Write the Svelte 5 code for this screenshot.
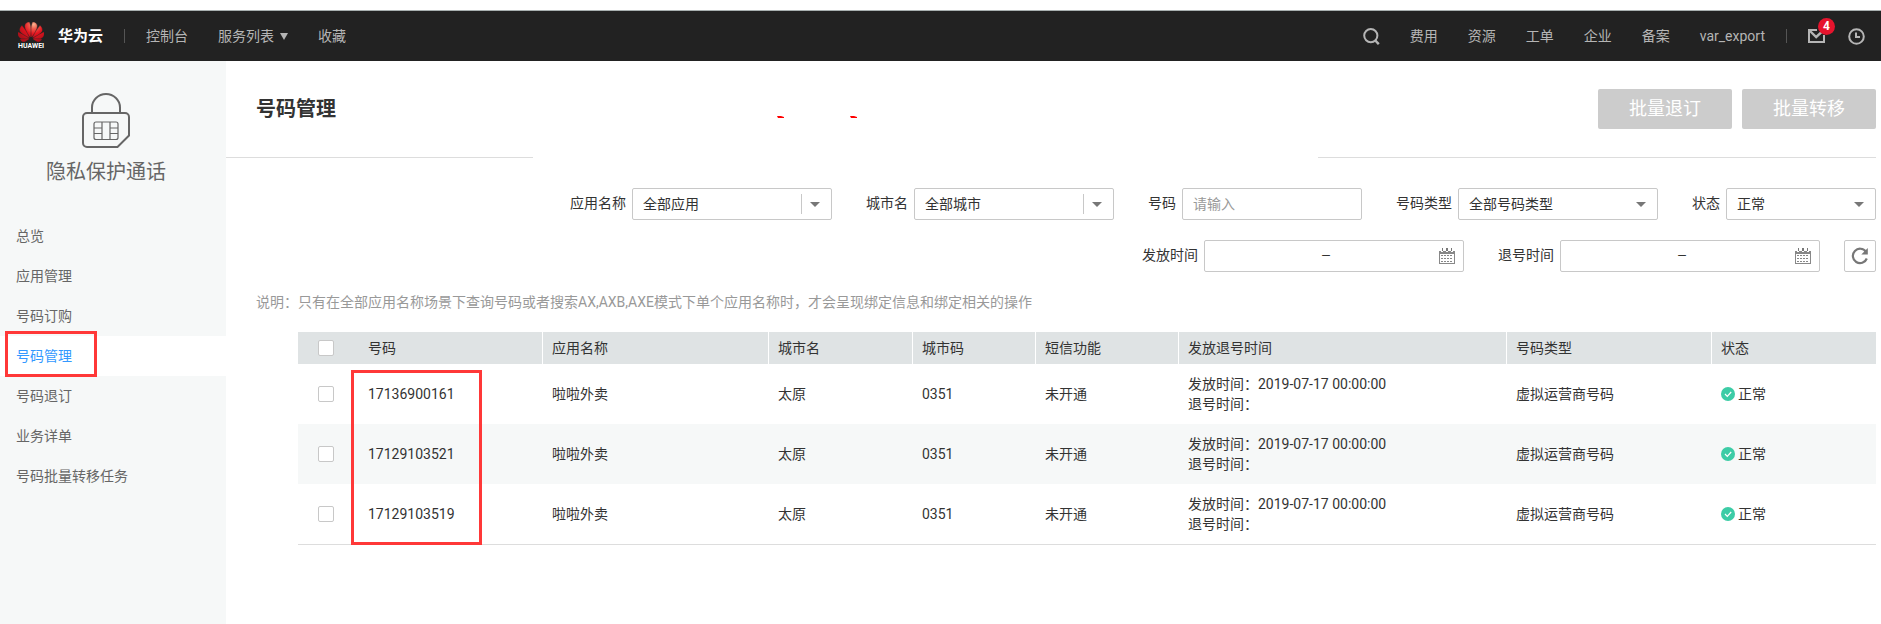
<script>
  const leftNav = ['控制台', '服务列表', '收藏'];
  const rightNav = ['费用', '资源', '工单', '企业', '备案', 'var_export'];
  const menu = ['总览', '应用管理', '号码订购', '号码管理', '号码退订', '业务详单', '号码批量转移任务'];
  const active = '号码管理';
  const columns = ['号码', '应用名称', '城市名', '城市码', '短信功能', '发放退号时间', '号码类型', '状态'];
  const rows = ['17136900161', '17129103521', '17129103519'].map((number) => ({
    number,
    app: '啦啦外卖',
    city: '太原',
    code: '0351',
    sms: '未开通',
    issued: '2019-07-17 00:00:00',
    type: '虚拟运营商号码',
    status: '正常'
  }));
</script>

{#snippet dateRange(id, label)}
  <div class="field">
    <label for={id}>{label}</label>
    <div class="range">
      <input {id} type="text" />
      <span>—</span>
      <input type="text" aria-label={label + '结束'} />
      <button type="button" aria-label="选择日期">
        <svg width="16" height="16" viewBox="0 0 16 16" shape-rendering="crispEdges">
          <path d="M0 3h2v1h2V3h3v1h2V3h3v1h2V3h2v13H0z" fill="#888" />
          <path d="M3 0h1v3H3zM7 0h2v3H7zM12 0h1v3h-1z" fill="#777" />
          <path d="M1 6h14v9H1z" fill="#fff" />
          <g fill="#888">
            {#each [7, 10, 13] as y}
              {#each [2, 5, 8, 11] as x}
                <rect x={x + 0} {y} width="2" height="1" />
              {/each}
            {/each}
          </g>
        </svg>
      </button>
    </div>
  </div>
{/snippet}

<header class="topbar">
  <a class="brand" href="#home">
    <span class="logo">
      <svg width="26" height="20" viewBox="0 2.8 24 18.4" aria-hidden="true">
        <defs>
          <radialGradient id="petal" gradientUnits="userSpaceOnUse" cx="14.5" cy="5" r="16">
            <stop offset="0" stop-color="#f9b48f" />
            <stop offset="0.25" stop-color="#ef5b4c" />
            <stop offset="0.55" stop-color="#e5141f" />
            <stop offset="1" stop-color="#b0101a" />
          </radialGradient>
        </defs>
        <path fill="url(#petal)" stroke="url(#petal)" stroke-width="0.4" d="M3.67 6.14S1.82 7.91 1.72 9.78v.35c.08 1.51 1.22 2.4 1.22 2.4 1.83 1.79 6.26 4.04 7.3 4.55 0 0 .06.03.1-.01l.02-.04v-.04C7.52 10.8 3.67 6.14 3.67 6.14zM9.65 18.6c-.02-.08-.1-.08-.1-.08l-7.38.26c.8 1.43 2.15 2.53 3.56 2.2.96-.25 3.16-1.78 3.88-2.3.06-.05.04-.09.04-.09zm.08-.78C6.49 15.63.21 12.28.21 12.28c-.15.46-.2.9-.21 1.3v.07c0 1.07.4 1.82.4 1.82.8 1.69 2.34 2.2 2.34 2.2.7.3 1.4.31 1.4.31.12.02 4.4 0 5.54 0 .05 0 .08-.05.08-.05v-.06c0-.03-.03-.05-.03-.05zM9.06 3.19a3.42 3.42 0 00-2.57 3.15v.41c.03.6.16 1.05.16 1.05.66 2.9 3.86 7.65 4.55 8.65.05.05.1.03.1.03a.1.1 0 00.06-.1c1.06-10.6-1.11-13.42-1.11-13.42-.32.02-1.19.23-1.19.23zm8.299 2.27s-.49-1.8-2.44-2.28c0 0-.57-.14-1.17-.22 0 0-2.18 2.81-1.12 13.43.01.07.06.08.06.08.07.03.1-.03.1-.03.72-1.03 3.9-5.76 4.55-8.64 0 0 .36-1.4.02-2.34zm-2.92 13.07s-.07 0-.09.05c0 0-.01.07.03.1.7.51 2.85 2 3.88 2.3 0 0 .16.05.43.06h.14c.69-.02 1.9-.37 3-2.26l-7.4-.25zm7.83-8.41c.14-2.06-1.94-3.97-1.94-3.98 0 0-3.85 4.66-6.67 10.8 0 0-.03.08.02.13l.04.01h.06c1.06-.53 5.46-2.77 7.28-4.54 0 0 1.15-.93 1.21-2.42zm1.52 2.14s-6.28 3.37-9.52 5.55c0 0-.05.04-.03.11 0 0 .03.06.07.06 1.16 0 5.56 0 5.67-.02 0 0 .57-.02 1.27-.29 0 0 1.56-.5 2.37-2.27 0 0 .73-1.45.17-3.14z" />
      </svg>
      <small>HUAWEI</small>
    </span>
    <strong>华为云</strong>
  </a>
  <i class="bar"></i>
  <nav class="left">
    {#each leftNav as item}
      <a href="#nav">{item}{#if item === '服务列表'}<i class="caret"></i>{/if}</a>
    {/each}
  </nav>
  <nav class="right">
    <button type="button" aria-label="搜索">
      <svg width="17" height="17" viewBox="0 0 17 17" fill="none" stroke="#b5b5b5" stroke-width="2">
        <ellipse cx="7.8" cy="7.6" rx="6.6" ry="6.6" /><path d="M11.8 12l4 4.2" stroke-width="2.4" />
      </svg>
    </button>
    {#each rightNav as item}
      <a href="#nav">{item}</a>
    {/each}
  </nav>
  <i class="bar"></i>
  <div class="tools">
    <button type="button" class="mail" aria-label="消息">
      <svg width="17" height="16" viewBox="0 0 17 16" fill="none" stroke="#b5b5b5" stroke-width="2">
        <path d="M9 2H1v12h15V7" /><path d="M2 3l6.2 6 5.3-4.8" stroke-width="2.4" />
      </svg>
      <span class="badge">4</span>
    </button>
    <button type="button" aria-label="历史">
      <svg width="17" height="17" viewBox="0 0 17 17" fill="none" stroke="#b5b5b5" stroke-width="2">
        <circle cx="8.5" cy="8.5" r="7.3" /><path d="M8 4.5v4.5h4" />
      </svg>
    </button>
  </div>
</header>

<div class="layout">
  <aside>
    <div class="service">
      <svg width="48" height="56" viewBox="0 0 48 56" fill="none" stroke="#666" stroke-width="2">
        <path d="M10 20V14.5a14 13.5 0 0 1 28 0V20" />
        <path d="M5 20h38a4 4 0 0 1 4 4v18.500L35.500 54H5a4 4 0 0 1-4-4V24a4 4 0 0 1 4-4z" />
        <g stroke-width="1.200">
          <rect x="12" y="29" width="24" height="17.500" rx="2" />
          <path d="M20 29v17.500M28 29v17.500M12 35h8M12 40.500h8M28 35h8M28 40.500h8" />
        </g>
      </svg>
      <h2>隐私保护通话</h2>
    </div>
    <ul>
      {#each menu as item}
        <li class:active={item === active}>
          <a href="#menu">{item}</a>
          {#if item === active}<i class="mark"></i>{/if}
        </li>
      {/each}
    </ul>
  </aside>

  <main>
    <div class="head">
      <h1>号码管理</h1>
      <svg class="ticks" width="80" height="2" viewBox="0 0 80 2" aria-hidden="true">
        <path d="M0 0h4l3 1v1H1zM73 0h4l3 1v1h-6z" fill="#f00" />
      </svg>
      <div class="actions">
        <button type="button">批量退订</button>
        <button type="button">批量转移</button>
      </div>
    </div>
    <div class="rule"></div>

    <form>
      <div class="line">
        <div class="field">
          <label for="filter-app">应用名称</label>
          <span class="select split"><select id="filter-app"><option>全部应用</option></select></span>
        </div>
        <div class="field">
          <label for="filter-city">城市名</label>
          <span class="select split"><select id="filter-city"><option>全部城市</option></select></span>
        </div>
        <div class="field">
          <label for="filter-number">号码</label>
          <input class="text" id="filter-number" type="text" placeholder="请输入" />
        </div>
        <div class="field">
          <label for="filter-type">号码类型</label>
          <span class="select"><select id="filter-type"><option>全部号码类型</option></select></span>
        </div>
        <div class="field">
          <label for="filter-state">状态</label>
          <span class="select short"><select id="filter-state"><option>正常</option></select></span>
        </div>
      </div>
      <div class="line">
        {@render dateRange('filter-issued', '发放时间')}
        {@render dateRange('filter-cancelled', '退号时间')}
        <button class="refresh" type="button" aria-label="刷新">
          <svg width="18" height="18" viewBox="0 0 18 18" fill="none" stroke="#777" stroke-width="2.200">
            <path d="M15 4.800A7.200 7.200 0 1 0 15.800 11.500" /><path d="M16.800 1v6.500h-6.500z" fill="#777" stroke="none" />
          </svg>
        </button>
      </div>
    </form>

    <p class="note">说明：只有在全部应用名称场景下查询号码或者搜索AX,AXB,AXE模式下单个应用名称时，才会呈现绑定信息和绑定相关的操作</p>

    <div class="grid">
      <table>
        <colgroup>
          {#each [60, 184, 226, 144, 123, 143, 328, 205, 165] as w}
            <col style:width="{(w / 1578) * 100}%" />
          {/each}
        </colgroup>
        <thead>
          <tr>
            <th class="check"><input type="checkbox" aria-label="全选" /></th>
            {#each columns as c}<th>{c}</th>{/each}
          </tr>
        </thead>
        <tbody>
          {#each rows as r}
            <tr>
              <td class="check"><input type="checkbox" aria-label={r.number} /></td>
              <td>{r.number}</td>
              <td>{r.app}</td>
              <td>{r.city}</td>
              <td>{r.code}</td>
              <td>{r.sms}</td>
              <td>发放时间：{r.issued}<br />退号时间：</td>
              <td>{r.type}</td>
              <td>
                <span class="status">
                  <svg width="14" height="14" viewBox="0 0 14 14">
                    <circle cx="7" cy="7" r="7" fill="#3dcca6" />
                    <path d="M4 7l2.300 2.400L10.200 5" fill="none" stroke="#fff" stroke-width="1.200" />
                  </svg>{r.status}
                </span>
              </td>
            </tr>
          {/each}
        </tbody>
      </table>
      <i class="mark"></i>
    </div>
  </main>
</div>

<style>
  :global(body) {
    background: #fff;
    color: #333;
    font: 14px/20px Roboto, 'Noto Sans CJK SC', sans-serif;
  }
  :global(#app) { display: flex; flex-direction: column; min-height: 100vh; }
  a { color: inherit; text-decoration: none; }
  svg { display: block; flex: none; }
  button, input, select { font: inherit; color: inherit; box-sizing: border-box; }
  button { padding: 0; border: 0; background: none; }

  .topbar {
    display: flex;
    align-items: center;
    height: 50px;
    margin-top: 10px;
    padding: 0 16px 0 18px;
    border-top: 1px solid #a9b0b0;
    background: #222;
    color: #b5b5b5;
  }
  .brand { display: flex; align-items: center; gap: 14px; color: #fff; }
  .logo { display: flex; flex-direction: column; width: 26px; }
  .logo small { font-size: 7px; line-height: 9px; font-weight: 700; }
  .brand strong { font-size: 15px; }
  .bar { width: 1px; height: 14px; margin: 0 21px; background: #555; }
  nav { display: flex; align-items: center; gap: 30px; }
  .left a { display: flex; align-items: center; gap: 6px; }
  .right { margin-left: auto; }
  .caret { border: 4px solid transparent; border-top: 7px solid #b5b5b5; border-bottom: 0; }
  .tools { display: flex; align-items: center; gap: 23px; }
  .mail { position: relative; }
  .badge {
    position: absolute;
    left: 10px;
    top: -10px;
    width: 17px;
    height: 17px;
    border-radius: 50%;
    background: #e6142d;
    color: #fff;
    font-size: 12px;
    line-height: 17px;
    font-weight: 700;
    text-align: center;
  }

  .layout { display: flex; flex: 1; }
  aside { flex: none; width: 226px; background: #f6f8f8; color: #666; }
  .service { display: flex; flex-direction: column; align-items: center; padding: 32px 14px 0 0; }
  h2 { margin: 9px 0 0; font-size: 20px; line-height: 28px; font-weight: 400; }
  ul { margin: 30px 0 0; padding: 0; list-style: none; }
  li { position: relative; }
  li a { display: block; padding: 0 16px; line-height: 40px; }
  .active { background: #fff; color: #3399ff; }
  .mark { position: absolute; box-sizing: border-box; border: 3px solid #ff3838; pointer-events: none; }
  li .mark { left: 5px; top: -5px; width: 92px; height: 46px; }

  main { flex: 1; min-width: 0; padding-right: 5px; }
  .head { position: relative; display: flex; align-items: center; justify-content: space-between; height: 96px; padding-left: 30px; }
  h1 { margin: 0; font-size: 20px; line-height: 30px; font-weight: 700; }
  .ticks { position: absolute; left: 551px; top: 55px; }
  .actions { display: flex; gap: 10px; }
  .actions button { width: 134px; height: 40px; border-radius: 2px; background: #ccc; color: #fff; font-size: 18px; }
  .rule { height: 1px; background: linear-gradient(90deg, #ddd 18.6%, transparent 0 66.2%, #ddd 0); }

  form { display: flex; flex-direction: column; gap: 20px; margin-top: 30px; }
  .line { display: flex; justify-content: flex-end; gap: 34px; }
  .field { display: flex; gap: 6px; }
  .field label { line-height: 30px; white-space: nowrap; }
  .select { position: relative; width: 200px; }
  .short { width: 150px; }
  select, .text, .range, .refresh { height: 32px; border: 1px solid #c8c8c8; border-radius: 2px; background: #fff; }
  select { display: block; width: 100%; padding: 0 10px; appearance: none; }
  .select::after {
    content: '';
    position: absolute;
    right: 12px;
    top: 14px;
    border: 5px solid transparent;
    border-top-color: #777;
    border-bottom: 0;
    pointer-events: none;
  }
  .split::before { content: ''; position: absolute; right: 30px; top: 6px; width: 1px; height: 20px; background: #c8c8c8; }
  .text { width: 180px; padding: 0 10px; }
  .text::placeholder { color: #999; }
  .range { display: flex; align-items: center; box-sizing: border-box; width: 260px; padding: 0 8px; }
  .range input { flex: 1; min-width: 0; padding: 0; border: 0; outline: 0; background: none; }
  .range span { font-size: 12px; text-align: center; }
  .refresh { display: grid; place-items: center; width: 32px; margin-left: -10px; }

  .note { margin: 20px 30px 0; color: #999; }
  .grid { position: relative; margin: 20px 0 0 72px; }
  table { width: 100%; table-layout: fixed; border-collapse: separate; border-spacing: 0; border-bottom: 1px solid #ddd; }
  th, td { padding: 0 10px; text-align: left; font-weight: 400; }
  th { height: 32px; background: #dfe3e4; }
  td { height: 60px; }
  th:nth-child(n + 3) { box-shadow: inset 1px 0 #fff; }
  tbody tr:nth-child(even) { background: #f6f8f8; }
  .check { padding: 0 20px; line-height: 0; }
  .check input { display: block; width: 16px; height: 16px; margin: 0; border: 1px solid #c8c8c8; border-radius: 2px; background: #fff; appearance: none; }
  .status { display: flex; align-items: center; gap: 3px; }
  .grid .mark { left: 53px; top: 38px; width: 131px; bottom: 0; }
</style>
